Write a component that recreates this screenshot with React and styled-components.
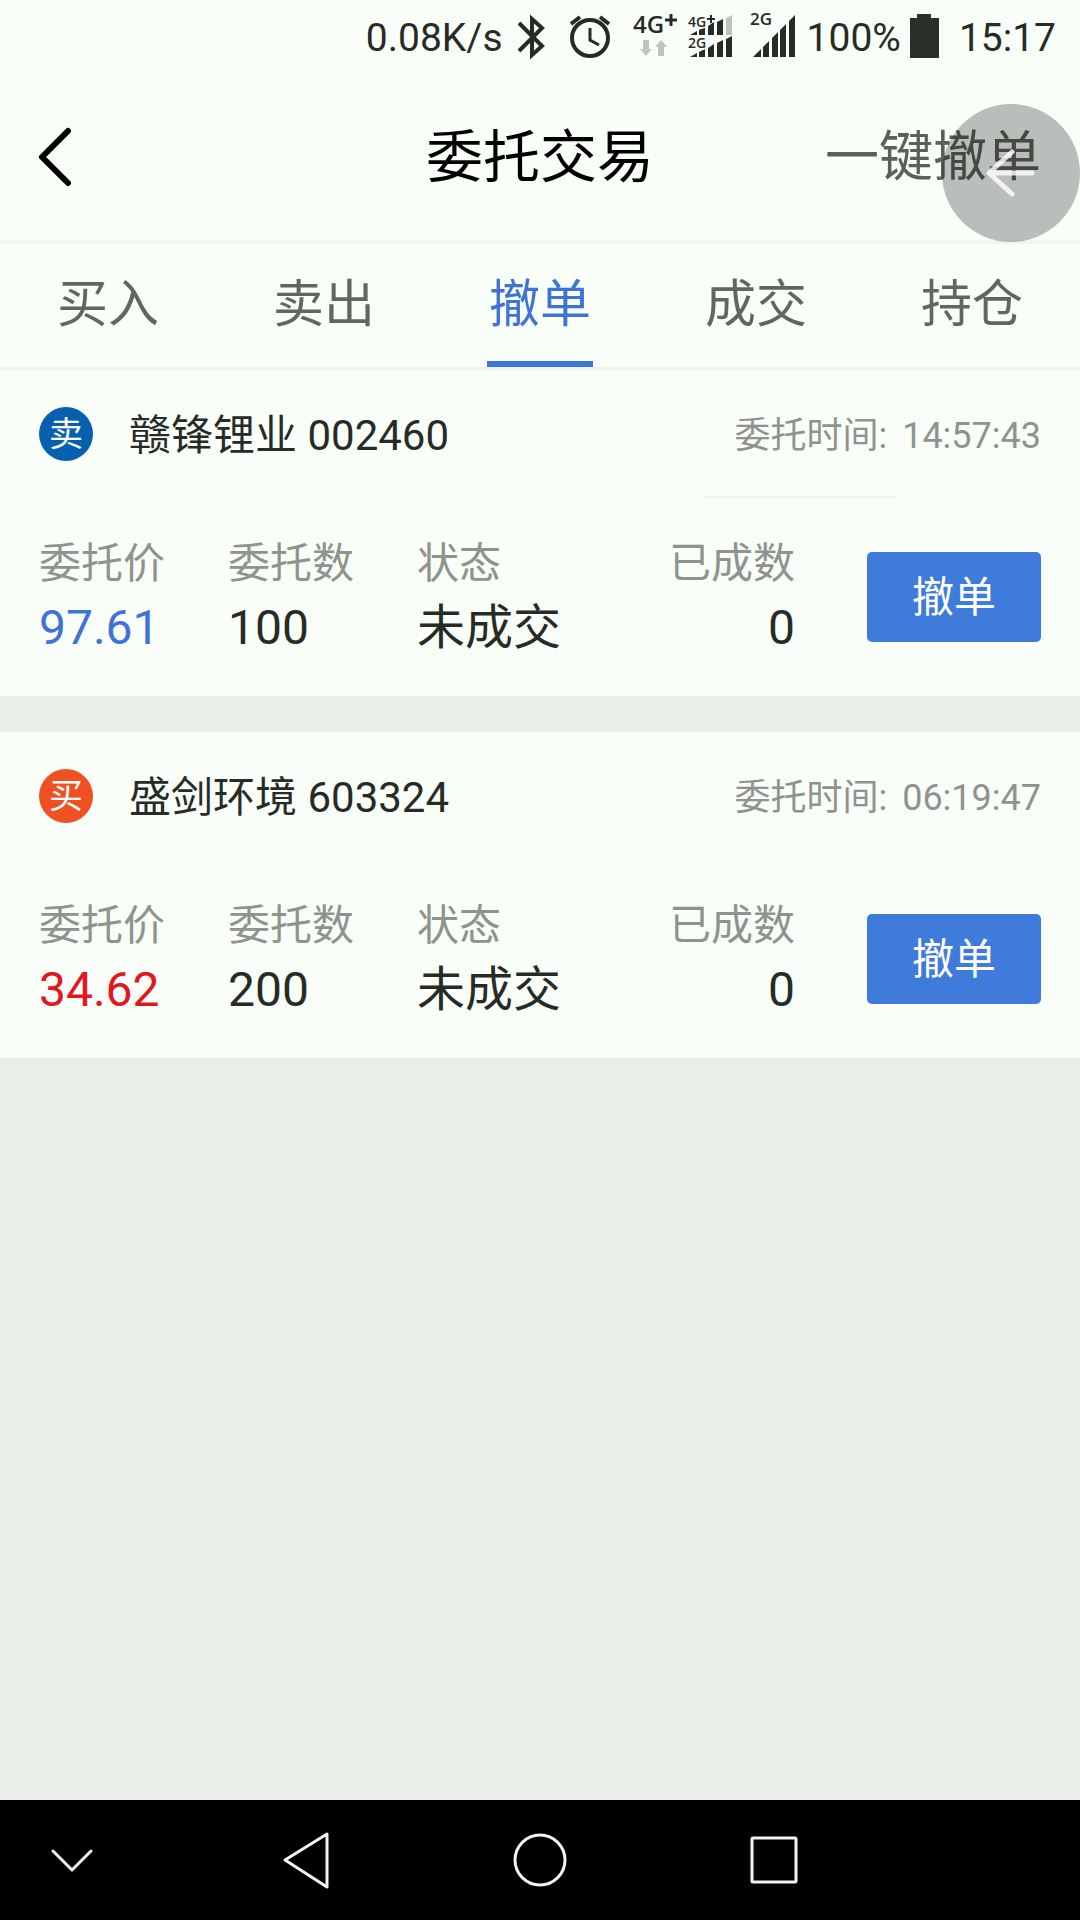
import { useState } from "react";
import styled, { createGlobalStyle } from "styled-components";

const tabs = ["买入", "卖出", "撤单", "成交", "持仓"];

const orders = [
  {
    id: 1,
    side: "卖",
    name: "赣锋锂业",
    code: "002460",
    time: "14:57:43",
    price: "97.61",
    amount: "100",
    status: "未成交",
    done: "0",
    divider: true,
  },
  {
    id: 2,
    side: "买",
    name: "盛剑环境",
    code: "603324",
    time: "06:19:47",
    price: "34.62",
    amount: "200",
    status: "未成交",
    done: "0",
    divider: false,
  },
];

function BluetoothIcon() {
  return (
    <svg width="50" height="48" viewBox="0 0 50 48" fill="none" stroke="#272b27" strokeWidth="4">
      <path d="M8 11 L31 34 L21 43 V7 L31 16 L8 39" />
    </svg>
  );
}

function AlarmIcon() {
  return (
    <svg width="56" height="48" viewBox="0 0 56 48" fill="none" stroke="#272b27">
      <circle cx="21" cy="26" r="18" strokeWidth="4" />
      <path d="M21 16 V28 L30 33" strokeWidth="3" />
      <path d="M2 12 L11 5 M31 5 L40 12" strokeWidth="4" />
    </svg>
  );
}

function NetworkIcon() {
  return (
    <svg width="47" height="68" viewBox="0 -10 47 68">
      <text x="0" y="21" fontFamily="Open Sans" fontSize="24" fontWeight="600" fill="#272b27">4G</text>
      <path d="M32 8 H44 M38 2 V14" stroke="#272b27" strokeWidth="3" />
      <path d="M10 28 h6 v9 h3 l-6 7 l-6 -7 h3z M25 44 h6 v-9 h3 l-6 -7 l-6 7 h3z" fill="#c0c4bf" />
    </svg>
  );
}

function DualSignalIcon() {
  return (
    <svg width="54" height="68" viewBox="0 -10 54 68">
      <g fill="#272b27">
        <path d="M2 23 L9 19 V23z M11 18 L17 15 V23 H11z M20 14 L26 10 V23 H20z M29 10 L35 7 V23 H29z" />
        <path d="M2 45 L9 41 V45z M11 40 L17 37 V45 H11z M20 36 L26 32 V45 H20z M29 31 L35 28 V45 H29z M38 27 L44 24 V45 H38z" />
      </g>
      <path d="M38 6 L44 3 V23 H38z" fill="#c0c4bf" />
      <g fontFamily="Open Sans" fontSize="14" fontWeight="600" fill="#272b27" stroke="#f9fef8" strokeWidth="3" paintOrder="stroke">
        <text x="0" y="15">4G</text>
        <text x="0" y="36">2G</text>
      </g>
      <path d="M19 7 H27 M23 3 V11" stroke="#272b27" strokeWidth="2" />
    </svg>
  );
}

function SignalIcon() {
  return (
    <svg width="49" height="68" viewBox="0 -10 49 68" fill="#272b27">
      <text x="0" y="13" fontFamily="Open Sans" fontSize="17" fontWeight="600">2G</text>
      <path d="M3 45 L11 37 V45z M13 35 L19 29 V45 H13z M22 26 L28 20 V45 H22z M30 18 L36 12 V45 H30z M39 9 L45 3 V45 H39z" />
    </svg>
  );
}

function BatteryIcon() {
  return (
    <svg width="42" height="48" viewBox="0 0 42 48" fill="#2b2f2a">
      <path d="M8 2 H22 V6 H30 V46 H1 V6 H8z" />
    </svg>
  );
}

function OrderCard({ order }) {
  const selling = order.side === "卖";

  return (
    <Card>
      <CardHeader>
        <Side $selling={selling}>{order.side}</Side>
        <StockName>{order.name} {order.code}</StockName>
        <OrderTime>
          委托时间: <time>{order.time}</time>
        </OrderTime>
      </CardHeader>
      <Divider $visible={order.divider} />
      <CardBody>
        <Fields>
          <Field>
            <dt>委托价</dt>
            <Value $color={selling ? "#3f74d4" : "#e3171f"}>{order.price}</Value>
          </Field>
          <Field>
            <dt>委托数</dt>
            <Value>{order.amount}</Value>
          </Field>
          <Field>
            <dt>状态</dt>
            <Value>{order.status}</Value>
          </Field>
          <Field $right>
            <dt>已成数</dt>
            <Value>{order.done}</Value>
          </Field>
        </Fields>
        <CancelButton>撤单</CancelButton>
      </CardBody>
    </Card>
  );
}

export default function App() {
  const [active, setActive] = useState("撤单");

  return (
    <Page>
      <GlobalStyle />

      <StatusBar>
        <StatusText>0.08K/s</StatusText>
        <BluetoothIcon />
        <AlarmIcon />
        <NetworkIcon />
        <DualSignalIcon />
        <SignalIcon />
        <StatusText>100%</StatusText>
        <BatteryIcon />
        <StatusText>15:17</StatusText>
      </StatusBar>

      <Header>
        <BackButton aria-label="返回">
          <svg width="34" height="60" viewBox="0 0 34 60" fill="none" stroke="#000" strokeWidth="6" strokeLinecap="round" strokeLinejoin="round">
            <path d="M29 5 L3 31 L29 57" />
          </svg>
        </BackButton>
        <Title>委托交易</Title>
        <CancelAll>一键撤单</CancelAll>
      </Header>

      <Tabs>
        {tabs.map((tab) => (
          <Tab key={tab} $active={tab === active} onClick={() => setActive(tab)}>
            <span>{tab}</span>
          </Tab>
        ))}
      </Tabs>

      <OrderList>
        {orders.map((order) => (
          <OrderCard key={order.id} order={order} />
        ))}
      </OrderList>

      <NavBar>
        <NavButton $edge aria-label="收起">
          <svg width="42" height="24" viewBox="0 0 42 24">
            <path d="M2 3 L21 22 L40 3" />
          </svg>
        </NavButton>
        <NavMain>
          <NavButton aria-label="后退">
            <svg width="46" height="58" viewBox="0 0 46 58">
              <path d="M44 3 V56 L2 29z" />
            </svg>
          </NavButton>
          <NavButton aria-label="主页">
            <svg width="56" height="56" viewBox="0 0 56 56">
              <circle cx="28" cy="28" r="25" />
            </svg>
          </NavButton>
          <NavButton aria-label="最近任务">
            <svg width="48" height="48" viewBox="0 0 48 48">
              <rect x="2" y="2" width="44" height="44" rx="1" />
            </svg>
          </NavButton>
        </NavMain>
        <NavSpace />
      </NavBar>

      <FloatingButton aria-label="悬浮返回">
        <svg width="50" height="50" viewBox="0 0 50 50" fill="none" stroke="#fff" strokeWidth="5" strokeLinecap="round" strokeLinejoin="round">
          <path d="M26 4 L3 25 L26 46 M4 25 H46" />
        </svg>
      </FloatingButton>
    </Page>
  );
}

const GlobalStyle = createGlobalStyle`
  * {
    box-sizing: border-box;
  }

  body {
    margin: 0;
    background-color: #eaeee8;
    font-family: Roboto, "Noto Sans CJK SC", sans-serif;
    color: #272b27;
  }

  button {
    padding: 0;
    border: none;
    background: none;
    font-family: inherit;
    color: inherit;
    cursor: pointer;
  }

  svg {
    display: block;
    flex-shrink: 0;
  }
`

const Page = styled.div`
  display: flex;
  flex-direction: column;
  min-height: 100vh;
`

const StatusBar = styled.div`
  display: flex;
  align-items: center;
  justify-content: flex-end;
  gap: 8px;
  height: 72px;
  padding: 0 24px;
  background-color: #f9fef8;
`

const StatusText = styled.span`
  padding-top: 4px;
  font-size: 39px;
  line-height: 48px;
`

const Header = styled.header`
  display: grid;
  grid-template-columns: 1fr auto 1fr;
  align-items: center;
  height: 172px;
  padding: 0 39px;
  background-color: #f9fef8;
  border-bottom: 4px solid #f1f5f0;
`

const BackButton = styled.button`
  justify-self: start;
`

const Title = styled.h1`
  margin: 0;
  padding-top: 4px;
  font-size: 57px;
  font-weight: 400;
  line-height: 72px;
  color: #000;
`

const CancelAll = styled.button`
  justify-self: end;
  padding-top: 4px;
  font-size: 54px;
  line-height: 72px;
  color: #5c605a;
`

const Tabs = styled.nav`
  display: flex;
  height: 126px;
  background-color: #f9fef8;
  border-bottom: 3px solid #f1f5f0;
`

const Tab = styled.button`
  display: flex;
  flex: 1;
  justify-content: center;
  font-size: 51px;
  line-height: 122px;
  color: ${(props) => (props.$active ? "#3f74d4" : "#62665f")};

  span {
    height: 123px;
    padding: 0 2px;
    border-bottom: 6px solid ${(props) => (props.$active ? "#3e76d6" : "transparent")};
  }
`

const OrderList = styled.main`
  display: flex;
  flex: 1;
  flex-direction: column;
  gap: 36px;
`

const Card = styled.section`
  background-color: #f9fef8;
`

const CardHeader = styled.div`
  display: flex;
  align-items: center;
  height: 126px;
  padding: 2px 39px 0;
`

const Side = styled.span`
  display: flex;
  align-items: center;
  justify-content: center;
  width: 54px;
  height: 54px;
  margin-right: 36px;
  border-radius: 50%;
  background-color: ${(props) => (props.$selling ? "#0561b0" : "#f05022")};
  color: #fff;
  font-size: 34px;
  line-height: 54px;
`

const StockName = styled.h2`
  flex: 1;
  margin: 0;
  padding-top: 4px;
  font-size: 42px;
  font-weight: 400;
  line-height: 60px;
`

const OrderTime = styled.span`
  padding-top: 4px;
  font-size: 36px;
  line-height: 60px;
  color: #8f938e;

  time {
    margin-left: 6px;
  }
`

const Divider = styled.div`
  width: 192px;
  height: 2px;
  margin: 0 184px 0 auto;
  background-color: ${(props) => (props.$visible ? "#f1f5f0" : "transparent")};
`

const CardBody = styled.div`
  display: flex;
  align-items: center;
  gap: 72px;
  height: 198px;
  padding: 0 39px;
`

const Fields = styled.dl`
  display: grid;
  flex: 1;
  grid-template-columns: 25% 25% 1fr auto;
  margin: 0;
`

const Field = styled.div`
  text-align: ${(props) => (props.$right ? "right" : "left")};

  dt {
    font-size: 42px;
    line-height: 62px;
    color: #8f938e;
  }
`

const Value = styled.dd`
  margin: 0;
  font-size: 48px;
  line-height: 66px;
  color: ${(props) => props.$color || "#272b27"};
`

const CancelButton = styled.button`
  width: 174px;
  height: 90px;
  padding-top: 2px;
  border-radius: 5px;
  background-color: #3e7bdb;
  color: #fff;
  font-size: 42px;
  line-height: 60px;
`

const NavBar = styled.footer`
  display: flex;
  height: 120px;
  background-color: #000;
`

const NavMain = styled.div`
  display: flex;
  flex: 1;
  justify-content: center;
`

const NavButton = styled.button`
  display: flex;
  flex: 0 1 ${(props) => (props.$edge ? "144px" : "234px")};
  align-items: center;
  justify-content: center;

  svg {
    fill: none;
    stroke: #f4f4f4;
    stroke-width: 3px;
    stroke-linejoin: round;
    stroke-linecap: round;
  }
`

const NavSpace = styled.div`
  width: 144px;
`

/* sits over the header, like the system's assistive dot */
const FloatingButton = styled.button`
  position: absolute;
  top: 104px;
  right: 0;
  display: flex;
  align-items: center;
  justify-content: center;
  width: 138px;
  height: 138px;
  border-radius: 50%;
  background-color: rgba(0, 0, 0, 0.25);

  svg {
    opacity: 0.8;
  }
`
